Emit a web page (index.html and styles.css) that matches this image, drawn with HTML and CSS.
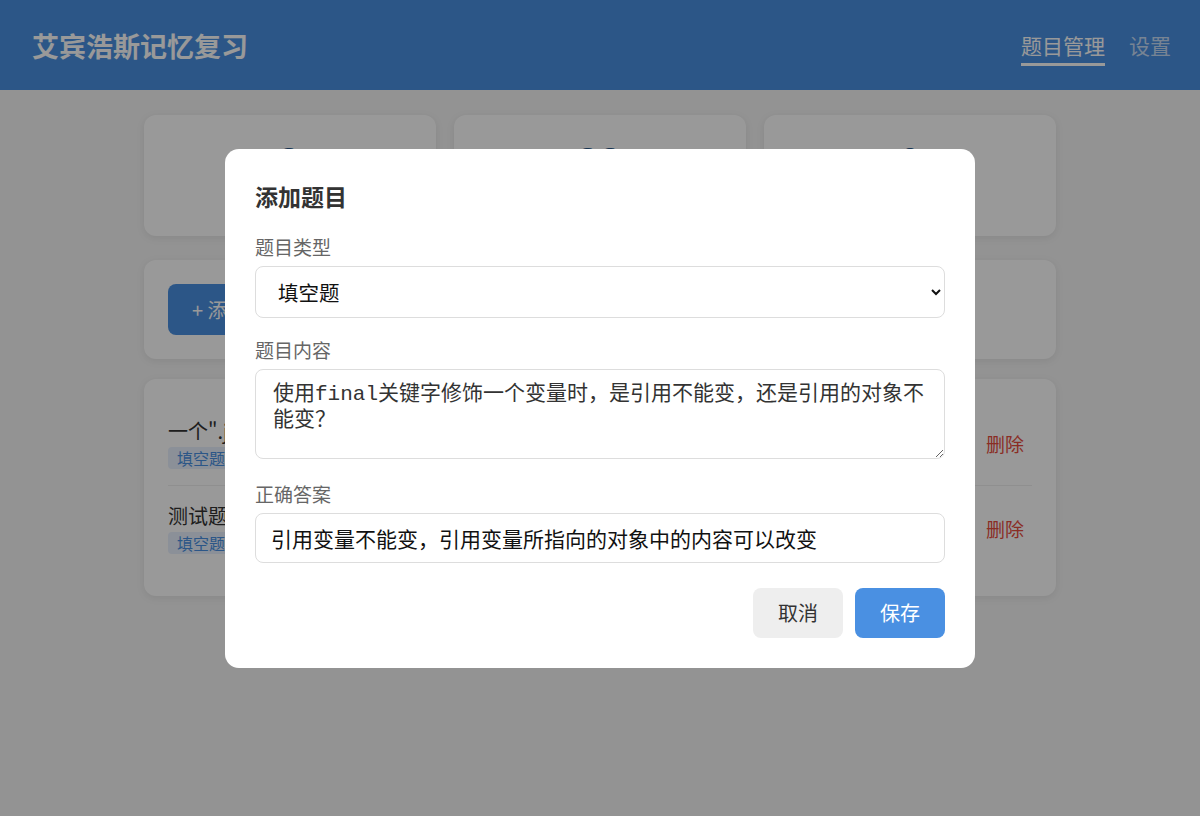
FILE: index.html
```html
<!DOCTYPE html>
<html lang="zh-CN">
<head>
  <meta charset="UTF-8">
  <meta name="viewport" content="width=device-width, initial-scale=1.0">
  <title>艾宾浩斯记忆复习</title>
  <link rel="stylesheet" href="styles.css">
</head>
<body>
  <header class="header">
    <div class="logo">艾宾浩斯记忆复习</div>
    <nav class="nav">
      <a class="nav-link active" href="#">题目管理</a>
      <a class="nav-link" href="#">设置</a>
    </nav>
  </header>

  <main class="container">
    <div class="stats">
      <div class="stat-card">
        <div class="stat-num">2</div>
        <div class="stat-label">题目总数</div>
      </div>
      <div class="stat-card">
        <div class="stat-num">22</div>
        <div class="stat-label">今日待复习</div>
      </div>
      <div class="stat-card">
        <div class="stat-num">0</div>
        <div class="stat-label">已掌握</div>
      </div>
    </div>

    <div class="card toolbar">
      <button class="btn btn-primary">+ 添加题目</button>
    </div>

    <div class="card list">
      <div class="item">
        <div class="item-main">
          <div class="item-title">一个".java"源文件中是否可以包括多个类？</div>
          <span class="tag">填空题</span>
        </div>
        <button class="btn-link danger">删除</button>
      </div>
      <div class="item">
        <div class="item-main">
          <div class="item-title">测试题目</div>
          <span class="tag">填空题</span>
        </div>
        <button class="btn-link danger">删除</button>
      </div>
    </div>
  </main>

  <!-- 添加题目弹窗 -->
  <div class="overlay">
    <div class="modal">
      <h2>添加题目</h2>
      <div class="form-group">
        <label>题目类型</label>
        <select class="field">
          <option>填空题</option>
          <option>选择题</option>
        </select>
      </div>
      <div class="form-group group-area">
        <label>题目内容</label>
        <textarea class="field area">使用final关键字修饰一个变量时，是引用不能变，还是引用的对象不能变？</textarea>
      </div>
      <div class="form-group">
        <label>正确答案</label>
        <input class="field" type="text" value="引用变量不能变，引用变量所指向的对象中的内容可以改变">
      </div>
      <div class="actions">
        <button class="btn btn-gray">取消</button>
        <button class="btn btn-primary">保存</button>
      </div>
    </div>
  </div>
</body>
</html>
```

FILE: styles.css
```css
* {
  box-sizing: border-box;
}
body {
  margin: 0;
  font-family: "Noto Sans CJK SC", "Noto Sans", sans-serif;
  background-color: #f5f5f5;
  color: #333;
  min-height: 100vh;
}
.header {
  height: 90px;
  background-color: #4a90e2;
  color: white;
  display: flex;
  align-items: center;
  justify-content: space-between;
  padding: 0 29px 0 32px;
}
.logo {
  font-size: 27px;
  font-weight: 700;
}
.nav {
  display: flex;
  gap: 24px;
  padding-top: 7px;
}
.nav-link {
  color: rgba(255, 255, 255, 0.7);
  text-decoration: none;
  font-size: 21px;
  line-height: 28px;
  padding-bottom: 4px;
  border-bottom: 3px solid transparent;
}
.nav-link.active {
  color: white;
  border-bottom-color: white;
}
.container {
  width: 912px;
  margin: 25px auto 0;
}
.stats {
  display: grid;
  grid-template-columns: repeat(3, 1fr);
  gap: 18px;
  margin-bottom: 24px;
}
.stat-card, .card {
  background: white;
  border-radius: 12px;
  box-shadow: 0 2px 8px rgba(0, 0, 0, 0.08);
}
.stat-card {
  height: 121px;
  padding: 22px;
  text-align: center;
}
.stat-num {
  font-size: 38px;
  font-weight: 700;
  line-height: 46px;
  color: #2c5a8a;
}
.stat-label {
  font-size: 17px;
  color: #666;
  margin-top: 6px;
}
.card {
  padding: 24px;
  margin-bottom: 20px;
}
.btn {
  border: none;
  border-radius: 8px;
  font-family: inherit;
  font-size: 20px;
  cursor: pointer;
}
.btn-primary {
  background-color: #4a90e2;
  color: white;
}
.btn-gray {
  background-color: #eee;
  color: #333;
}
.toolbar .btn {
  height: 51px;
  padding: 0 24px;
}
.item {
  display: flex;
  align-items: center;
  justify-content: space-between;
  padding: 16px 0;
  border-bottom: 1px solid #eee;
}
.item:first-child {
  padding-top: 14px;
}
.item:last-child {
  padding-bottom: 18px;
  border-bottom: none;
}
.item-main {
  display: flex;
  flex-direction: column;
  align-items: flex-start;
  gap: 2px;
}
.item-title {
  font-size: 20px;
  line-height: 28px;
}
.tag {
  padding: 0 9px;
  height: 22px;
  line-height: 22px;
  font-size: 16px;
  background: #e8f0fe;
  color: #4a90e2;
  border-radius: 4px;
}
.btn-link {
  background: none;
  border: none;
  font-family: inherit;
  font-size: 19px;
  padding: 4px 8px;
  cursor: pointer;
}
.danger {
  color: #e74c3c;
}
.overlay {
  position: fixed;
  inset: 0;
  background: rgba(0, 0, 0, 0.4);
  display: flex;
  align-items: center;
  justify-content: center;
}
.modal {
  width: 750px;
  background: white;
  border-radius: 14px;
  padding: 30px;
}
.modal h2 {
  margin: 0 0 21px;
  font-size: 23px;
  line-height: 34px;
  font-weight: 700;
  color: #333;
}
.form-group {
  margin-bottom: 19px;
}
.form-group.group-area {
  margin-bottom: 22px;
}
.form-group label {
  display: block;
  font-size: 19px;
  line-height: 26px;
  color: #666;
  margin-bottom: 6px;
}
.field {
  display: block;
  width: 100%;
  height: 50px;
  border: 1px solid #ddd;
  border-radius: 8px;
  padding: 0 15px;
  font-family: inherit;
  font-size: 21px;
  color: #111;
  background: white;
}
select.field {
  height: 52px;
  padding: 0 14px 0 18px;
  font-size: 20.5px;
}
.field.area {
  height: 90px;
  padding: 12px 15px 12px 17px;
  font-family: "Liberation Mono", "Noto Sans CJK SC", monospace;
  font-size: 21px;
  line-height: 26px;
  color: #333;
  resize: vertical;
}
.actions {
  display: flex;
  justify-content: flex-end;
  gap: 12px;
  padding-top: 6px;
}
.actions .btn {
  width: 90px;
  height: 50px;
}
```
